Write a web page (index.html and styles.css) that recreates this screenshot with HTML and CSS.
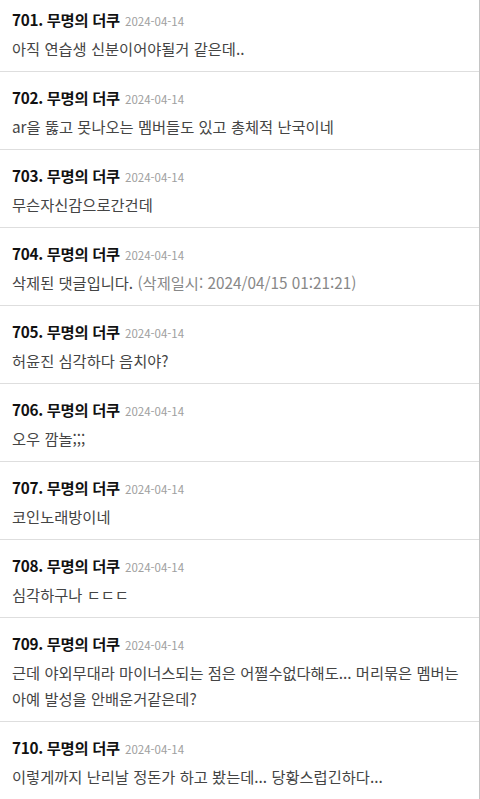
FILE: index.html
```html
<!DOCTYPE html>
<html lang="ko">
<head>
  <meta charset="UTF-8">
  <title>댓글</title>
  <link rel="stylesheet" href="styles.css">
</head>
<body>
  <div class="comments">
    <div class="comment">
      <div class="head"><b>701. 무명의 더쿠</b> <span class="date">2024-04-14</span></div>
      <div class="text">아직 연습생 신분이어야될거 같은데..</div>
    </div>
    <div class="comment">
      <div class="head"><b>702. 무명의 더쿠</b> <span class="date">2024-04-14</span></div>
      <div class="text">ar을 뚫고 못나오는 멤버들도 있고 총체적 난국이네</div>
    </div>
    <div class="comment">
      <div class="head"><b>703. 무명의 더쿠</b> <span class="date">2024-04-14</span></div>
      <div class="text">무슨자신감으로간건데</div>
    </div>
    <div class="comment">
      <div class="head"><b>704. 무명의 더쿠</b> <span class="date">2024-04-14</span></div>
      <div class="text">삭제된 댓글입니다. <span class="deleted">(삭제일시: 2024/04/15 01:21:21)</span></div>
    </div>
    <div class="comment">
      <div class="head"><b>705. 무명의 더쿠</b> <span class="date">2024-04-14</span></div>
      <div class="text">허윤진 심각하다 음치야?</div>
    </div>
    <div class="comment">
      <div class="head"><b>706. 무명의 더쿠</b> <span class="date">2024-04-14</span></div>
      <div class="text">오우 깜놀;;;</div>
    </div>
    <div class="comment">
      <div class="head"><b>707. 무명의 더쿠</b> <span class="date">2024-04-14</span></div>
      <div class="text">코인노래방이네</div>
    </div>
    <div class="comment">
      <div class="head"><b>708. 무명의 더쿠</b> <span class="date">2024-04-14</span></div>
      <div class="text">심각하구나 ㄷㄷㄷ</div>
    </div>
    <div class="comment">
      <div class="head"><b>709. 무명의 더쿠</b> <span class="date">2024-04-14</span></div>
      <div class="text">근데 야외무대라 마이너스되는 점은 어쩔수없다해도... 머리묶은 멤버는 아예 발성을 안배운거같은데?</div>
    </div>
    <div class="comment">
      <div class="head"><b>710. 무명의 더쿠</b> <span class="date">2024-04-14</span></div>
      <div class="text">이렇게까지 난리날 정돈가 하고 봤는데... 당황스럽긴하다...</div>
    </div>
  </div>
</body>
</html>
```

FILE: styles.css
```css
body {
  margin: 0;
  background: #fff;
  font-family: "Noto Sans CJK KR", "Noto Sans", sans-serif;
}

/* page is scrolled a little past the top of comment 701 */
.comments {
  margin-top: -6px;
  border-right: 1px solid #c4c4c4;
}

.comment {
  padding: 13px 12px 10px;
  border-bottom: 1px solid #dedede;
}

.head {
  font-size: 15.3px;
  line-height: 24px;
  color: #111;
  margin-bottom: 4px;
}

.head b {
  font-weight: 700;
  letter-spacing: -0.3px;
}

.date {
  font-size: 11.5px;
  line-height: 1;
  color: #a0a0a0;
  margin-left: 1px;
}

.text {
  font-size: 15.3px;
  line-height: 26px;
  color: #444;
}

.deleted {
  color: #888;
}
```
